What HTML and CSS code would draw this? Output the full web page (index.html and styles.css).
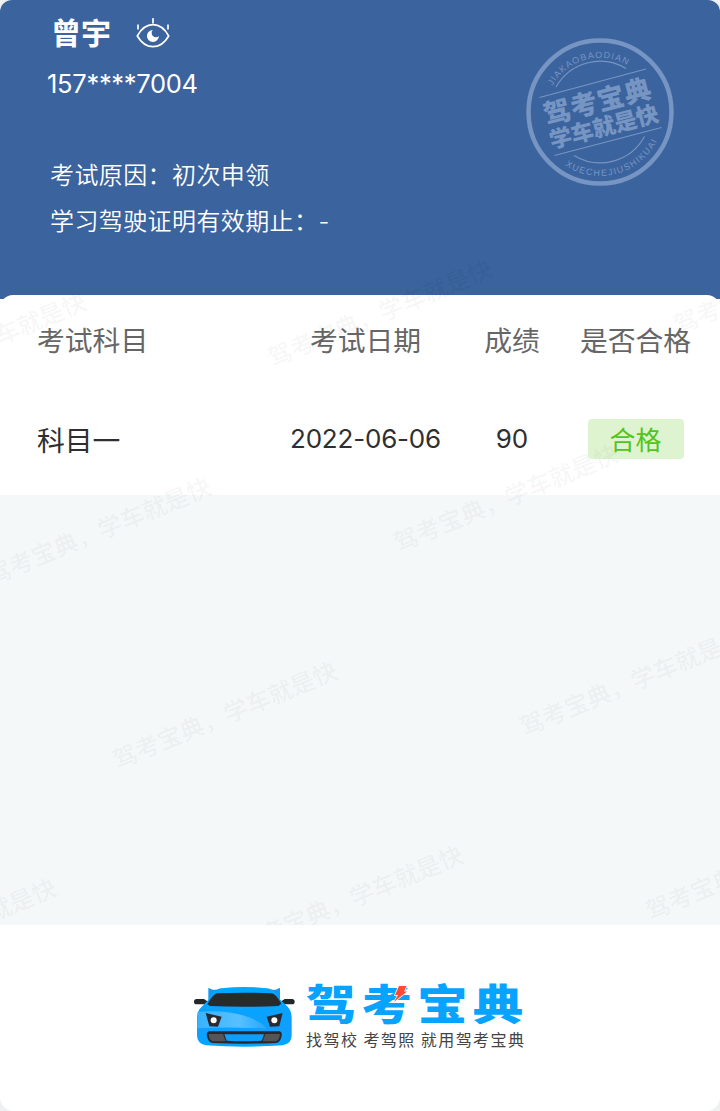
FILE: index.html
```html
<!DOCTYPE html>
<html lang="zh-CN">
<head>
<meta charset="utf-8">
<title>考试成绩</title>
<link rel="stylesheet" href="styles.css">
</head>
<body>
<main class="card">
  <header class="profile">
    <div class="person">
      <div class="name-row">
        <h1 class="name">曾宇</h1>
        <svg class="eye" viewBox="0 0 34 30" aria-hidden="true">
          <path d="M1.3 18C5.2 10.9 10.7 6.7 17 6.7S28.800 10.900 32.700 18C28.800 24.700 23.300 28.700 17 28.700S5.200 24.700 1.300 18Z" fill="none" stroke="#fff" stroke-width="1.7" stroke-linejoin="round"/>
          <path d="M16.900 12a6 6 0 1 0 6 6 3 3 0 1 1-6-6Z" fill="#fff"/>
          <path d="M17 .8v4M2 7.200v3.600M32 7.200v3.600" stroke="#fff" stroke-width="1.700" stroke-linecap="round"/>
        </svg>
      </div>
      <p class="phone">157****7004</p>
      <p class="info">考试原因：初次申领</p>
      <p class="info">学习驾驶证明有效期止：<span class="dash">-</span></p>
    </div>
    <svg class="stamp" viewBox="-75 -75 150 150">
      <defs>
        <path id="arc-top" d="M-47.500 -26A54.200 54.200 0 0 1 45 -30.200"/>
        <path id="arc-bottom" d="M-35 53.500A64 64 0 0 0 62 16"/>
      </defs>
      <circle r="71.500" fill="none" stroke="#7795c2" stroke-width="4.500"/>
      <g fill="none" stroke="#7795c2" stroke-width="1.200">
        <path d="M-60.500 -14.500L46 -43M-45.500 43.500L61.500 15.500"/>
        <path d="M-44 -25A50.500 50.500 0 0 1 26 -43.500M-26 43.500A50.500 50.500 0 0 0 44.500 24.500"/>
      </g>
      <g fill="#7795c2">
        <text class="stamp-latin"><textPath href="#arc-top" textLength="86">JIAKAOBAODIAN</textPath></text>
        <text class="stamp-latin"><textPath href="#arc-bottom" textLength="107">XUECHEJIUSHIKUAI</textPath></text>
        <g transform="rotate(-14.500)">
          <text class="stamp-cn" x="-55" y="-1" textLength="110" font-size="27">驾考宝典</text>
          <text class="stamp-cn" x="-56" y="23.500" textLength="112" font-size="22.500">学车就是快</text>
        </g>
      </g>
    </svg>
  </header>

  <section class="results">
    <div class="row head">
      <span>考试科目</span><span class="mid">考试日期</span><span class="mid">成绩</span><span class="mid">是否合格</span>
    </div>
    <div class="row">
      <span>科目一</span><span class="mid num date">2022-06-06</span><span class="mid num">90</span><span class="mid"><b class="badge">合格</b></span>
    </div>
  </section>

  <section class="blank"></section>

  <footer class="brand">
    <svg class="car" viewBox="42 50 303 180" aria-hidden="true">
      <defs>
        <linearGradient id="body" x1="0" y1="0" x2="0" y2="1"><stop offset="0" stop-color="#00a8ff"/><stop offset=".75" stop-color="#119eff"/><stop offset="1" stop-color="#00a6ff"/></linearGradient>
        <linearGradient id="shine" x1="0" y1="0" x2="1" y2="0"><stop offset="0" stop-color="#38b2ff"/><stop offset=".6" stop-color="#58c0ff"/><stop offset="1" stop-color="#20aaff"/></linearGradient>
      </defs>
      <path d="M85 52L98 58H287L300 52V88H85Z" fill="#1598f2"/>
      <path d="M42 94Q42 86 50 86H72L84 94 76 102H50Q42 102 42 94ZM344 94Q344 86 336 86H314L302 94 310 102H336Q344 102 344 94Z" fill="#252629"/>
      <path d="M123 54Q194 46 262 54C280 56 292 72 301 88L323 109Q335 121 335 145V195Q335 221 308 225 195 233 78 225 51 221 51 195V145Q51 121 65 109L85 88C94 70 106 56 123 54Z" fill="url(#body)"/>
      <path d="M110 69Q194 65 276 69 289 72 304 100L295 107Q194 112 90 107L82 102Q96 75 110 69Z" fill="#292a2c"/>
      <path d="M53 125Q145 116 213 143 247 158 261 175 150 169 52 174Z" fill="url(#shine)"/>
      <path d="M77 128L125 139 114 169 88 168ZM308 128L260 139 270 169 298 168Z" fill="#292b31"/>
      <circle cx="101" cy="150" r="9" fill="#fff"/><circle cx="283" cy="150" r="9" fill="#fff"/>
      <path d="M86 183H299Q307 185 305 196 302 216 287 218 193 222 98 218 83 215 80 193 80 185 86 183Z" fill="#29292b"/>
      <path d="M86 191H129L137 213 99 213Q87 210 86 191ZM300 191H256L248 213 287 213Q298 210 300 191Z" fill="#555557"/>
      <path d="M133 192H252L245 211Q193 214 140 211Z" fill="#0b9fff"/>
    </svg>
    <div class="brand-text">
      <svg class="wordmark" viewBox="0 0 220 46">
        <text class="wordmark-text" transform="scale(1.200 1)" x="0" y="38" textLength="181">驾考宝典</text>
        <path d="M93 4H100.500L98 9.500H101L88 20 92 13H89Z" fill="#ff4b30" stroke="#fff" stroke-width="1.500" paint-order="stroke"/>
      </svg>
      <p class="slogan">找驾校 考驾照 就用驾考宝典</p>
    </div>
  </footer>

  <svg class="watermark" viewBox="0 0 720 925" aria-hidden="true">
    <text transform="translate(-126 387) rotate(-22.400)" x="-12" y="9">驾考宝典，学车就是快</text>
    <text transform="translate(280 354) rotate(-22.400)" x="-12" y="9">驾考宝典，学车就是快</text>
    <text transform="translate(686 321) rotate(-22.400)" x="-12" y="9">驾考宝典，学车就是快</text>
    <text transform="translate(-1 572) rotate(-22.400)" x="-12" y="9">驾考宝典，学车就是快</text>
    <text transform="translate(406 539) rotate(-22.400)" x="-12" y="9">驾考宝典，学车就是快</text>
    <text transform="translate(125 756) rotate(-22.400)" x="-12" y="9">驾考宝典，学车就是快</text>
    <text transform="translate(532 723) rotate(-22.400)" x="-12" y="9">驾考宝典，学车就是快</text>
    <text transform="translate(-156 973) rotate(-22.400)" x="-12" y="9">驾考宝典，学车就是快</text>
    <text transform="translate(251 940) rotate(-22.400)" x="-12" y="9">驾考宝典，学车就是快</text>
    <text transform="translate(658 907) rotate(-22.400)" x="-12" y="9">驾考宝典，学车就是快</text>
  </svg>
</main>
</body>
</html>
```
FILE: styles.css
```css
* { box-sizing: border-box; }

body {
  margin: 0;
  background: #eef0f1;
  font-family: "Noto Sans CJK SC", sans-serif;
}

h1, p { margin: 0; }

.card {
  position: relative;
  display: flex;
  flex-direction: column;
  width: 720px;
  height: 1111px;
  overflow: hidden;
  background: #fff;
  border-radius: 12px 12px 14px 14px;
}

.profile {
  display: flex;
  justify-content: space-between;
  flex: none;
  height: 299px;
  padding: 11px 45px 0 47px;
  background: #3b639e;
  color: #fff;
}

.name-row {
  display: flex;
  align-items: center;
  gap: 25px;
  height: 40px;
  padding-left: 4px;
}

.name {
  font-size: 30px;
  line-height: 40px;
  font-weight: 700;
}

.eye {
  width: 34px;
  height: 30px;
  margin-top: 3px;
}

.phone {
  height: 60px;
  margin-bottom: 40px;
  padding-top: 14px;
  font: 400 25.5px/38px Inter, sans-serif;
  letter-spacing: -0.3px;
}

.info {
  height: 46px;
  padding-left: 3px;
  font-size: 24px;
  line-height: 46px;
  letter-spacing: 0.4px;
  font-weight: 350;
  white-space: nowrap;
}

.dash {
  font-family: Inter, sans-serif;
}

.stamp {
  width: 150px;
  height: 150px;
  margin-top: 26px;
}

.stamp-latin {
  font-family: "Liberation Sans", sans-serif;
  font-size: 9px;
}

.stamp-cn { font-weight: 900; }

.results {
  z-index: 1;
  flex: none;
  height: 200px;
  margin-top: -4px;
  background: #fff;
  border-radius: 13px 13px 0 0;
}

.row {
  display: grid;
  grid-template-columns: 244px 169px 124px 123px;
  align-items: center;
  height: 112px;
  padding-left: 37px;
  font-size: 27.8px;
  line-height: 40px;
  color: #2f2f2f;
}

.head {
  height: 88px;
  color: #666;
}

.mid { text-align: center; }

.num {
  font-family: Inter, sans-serif;
  font-size: 26px;
}

.date { letter-spacing: -0.2px; }

.badge {
  display: block;
  width: 96px;
  height: 40px;
  margin: 0 auto;
  background: #def4d0;
  border-radius: 4px;
  color: #52c41a;
  font-size: 26px;
  line-height: 39px;
  font-weight: 400;
}

.blank {
  flex: none;
  height: 430px;
  background: #f4f8f9;
}

.brand {
  display: flex;
  gap: 11px;
  padding: 57px 0 0 194px;
}

.car {
  width: 101px;
  height: 60px;
  margin-top: 5px;
}

.wordmark {
  display: block;
  width: 220px;
  height: 46px;
}

.wordmark-text {
  font-size: 42px;
  font-weight: 900;
  fill: #08a3ff;
}

.slogan {
  font-size: 16px;
  line-height: 22px;
  letter-spacing: 1.45px;
  color: #444;
  white-space: nowrap;
}

.watermark {
  position: absolute;
  z-index: 2;
  top: 0;
  left: 0;
  width: 720px;
  height: 925px;
  pointer-events: none;
  font-size: 24px;
  font-weight: 500;
  fill: rgba(0, 0, 0, 0.055);
}
```
